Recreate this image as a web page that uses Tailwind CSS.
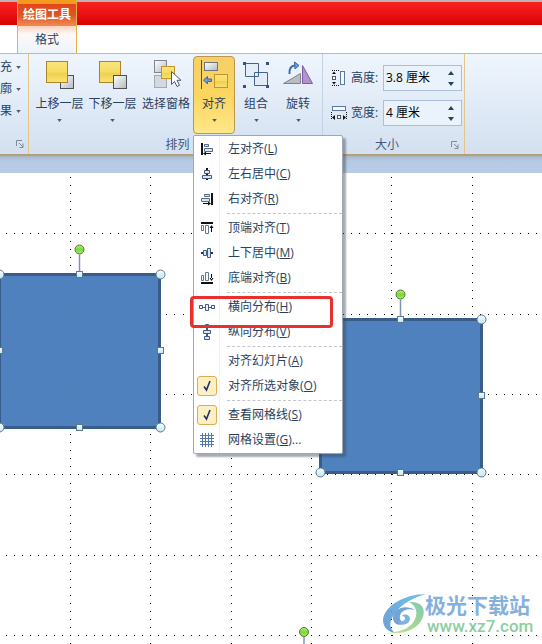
<!DOCTYPE html>
<html lang="zh-CN">
<head>
    <meta charset="UTF-8">
    <meta name="viewport" content="width=device-width, initial-scale=1.0">
    <title>绘图工具 - 格式</title>
    <script src="https://cdn.jsdelivr.net/npm/@tailwindcss/browser@4"></script>
</head>
<body class="relative min-h-screen flex flex-col overflow-hidden bg-white text-xs text-[#2b3f5e] font-['Open_Sans','Noto_Sans_CJK_SC',sans-serif]">
    <!-- title bar and tabs -->
    <header class="flex h-[53px] bg-linear-to-b from-[#bcb4b4] from-[2px] via-[#fa2020] via-[2px] to-[#d80000] to-[25px] bg-[length:100%_25px] bg-no-repeat">
        <div class="ml-[17px] w-[60px] flex flex-col border-x border-[#e2b04a]">
            <div class="h-[26px] border-t-4 border-[#f39a1c] bg-linear-to-b from-[#e2461b] via-[#dd5522] to-[#f28a55] flex items-center justify-center font-bold text-white leading-4 whitespace-nowrap">绘图工具</div>
            <button class="flex-1 bg-linear-to-b from-[#fbd3bd] via-[#fdf8f6] via-30% to-[#edf4fc]">格式</button>
        </div>
        <div class="flex-1"></div>
    </header>

    <!-- ribbon -->
    <section class="h-[103px] flex border-t border-b-2 border-t-[#dfb95e] border-b-[#b3a076] bg-linear-to-b from-[#eff5fd] via-[#e1ebf7] to-[#d3e0f0] whitespace-nowrap">
        <div class="w-[29px] shrink-0 flex flex-col border-r border-[#e3c58c]">
            <div class="h-[78px] pt-[2px] flex flex-col">
                <button class="h-[22px] flex items-center gap-1">充<svg class="w-[5px] h-[3px]" viewBox="0 0 6 4"><path d="M0 0h6L3 4z" fill="#4c5b72"/></svg></button>
                <button class="h-[22px] flex items-center gap-1">廓<svg class="w-[5px] h-[3px]" viewBox="0 0 6 4"><path d="M0 0h6L3 4z" fill="#4c5b72"/></svg></button>
                <button class="h-[22px] flex items-center gap-1">果<svg class="w-[5px] h-[3px]" viewBox="0 0 6 4"><path d="M0 0h6L3 4z" fill="#4c5b72"/></svg></button>
            </div>
            <button class="mt-auto mb-1 ml-4 w-3 h-3" aria-label="形状样式"><svg class="w-2 h-2" viewBox="0 0 8 8" fill="none" stroke="#7f8a9b"><path d="M.5 6V.5H6M3 3l4 4M7 3.500V7.500H3.500"/></svg></button>
        </div>

        <div class="w-[294px] shrink-0 flex flex-col border-r border-[#c5d2e3] pl-1">
            <div class="flex h-20 pt-[2px]">
                <button class="w-[53px] flex flex-col items-center">
                    <svg class="w-8 h-8 mt-1" viewBox="0 0 32 32">
                        <defs>
                            <linearGradient id="gold" x2="0" y2="1"><stop offset="0" stop-color="#fbe57e"/><stop offset=".5" stop-color="#f5dc62"/><stop offset=".55" stop-color="#efd04e"/><stop offset="1" stop-color="#fae374"/></linearGradient>
                            <linearGradient id="grey" x2="1" y2="1"><stop offset="0" stop-color="#ffffff"/><stop offset="1" stop-color="#b4b9c1"/></linearGradient>
                        </defs>
                        <rect x="16.500" y="15.500" width="13" height="13" fill="url(#grey)" stroke="#4c5058"/>
                        <rect x="2.500" y="1.500" width="21" height="21" fill="url(#gold)" stroke="#a8842c"/>
                    </svg>
                    <span class="mt-1 h-4 leading-4">上移一层</span>
                    <svg class="w-[5px] h-[3px] mt-[7px]" viewBox="0 0 6 4"><path d="M0 0h6L3 4z" fill="#4c5b72"/></svg>
                </button>
                <button class="w-[53px] flex flex-col items-center">
                    <svg class="w-8 h-8 mt-1" viewBox="0 0 32 32">
                        <rect x="2.500" y="1.500" width="21" height="21" fill="url(#gold)" stroke="#a8842c"/>
                        <rect x="16.500" y="15.500" width="13" height="13" fill="url(#grey)" stroke="#4c5058"/>
                    </svg>
                    <span class="mt-1 h-4 leading-4">下移一层</span>
                    <svg class="w-[5px] h-[3px] mt-[7px]" viewBox="0 0 6 4"><path d="M0 0h6L3 4z" fill="#4c5b72"/></svg>
                </button>
                <button class="w-[54px] flex flex-col items-center">
                    <svg class="w-8 h-8 mt-1" viewBox="0 0 32 32">
                        <rect x="4.500" y=".5" width="12" height="12" fill="url(#grey)" stroke="#7f858f"/>
                        <rect x="4.500" y="15.500" width="12" height="12" fill="#d4d9e0" stroke="#a3a9b3"/>
                        <rect x="11.500" y="6.500" width="13" height="12" fill="url(#gold)" stroke="#c4942a"/>
                        <path d="M21.500 11.500v13l3-3 2.500 5 2.500-1.200-2.500-5h4z" fill="#fff" stroke="#4f5a6e"/>
                    </svg>
                    <span class="mt-1 h-4 leading-4">选择窗格</span>
                </button>
                <button class="w-[42px] h-[78px] flex flex-col items-center rounded-sm border border-[#bd9648] bg-linear-to-b from-[#f6cf68] via-[#fbd55e] to-[#ffe78a]" aria-expanded="true">
                    <svg class="w-8 h-8 mt-[3px]" viewBox="0 0 32 32">
                        <path d="M3.500 0v29" stroke="#3f526f"/>
                        <rect x="6.500" y="2.500" width="13" height="8" fill="url(#grey)" stroke="#70757e"/>
                        <rect x="16.500" y="14.500" width="13" height="13" fill="url(#gold)" stroke="#c4942a"/>
                        <path d="M5.500 20l4-3.500V19h4v2.500h-4V24z" fill="#6f9de0" stroke="#3c65ad"/>
                    </svg>
                    <span class="mt-1 h-4 leading-4">对齐</span>
                    <svg class="w-[5px] h-[3px] mt-[7px]" viewBox="0 0 6 4"><path d="M0 0h6L3 4z" fill="#4c5b72"/></svg>
                </button>
                <button class="w-[42px] flex flex-col items-center">
                    <svg class="w-8 h-8 mt-1" viewBox="0 0 32 32">
                        <path d="M5.500 3.500h13v13h-13zM14.500 12.500h13v13h-13z" fill="#dfe9f6" fill-opacity=".6" stroke="#45628f"/>
                        <path d="M3 2h3v3H3zM26 2h3v3h-3zM3 25h3v3H3zM26 25h3v3h-3z" fill="#2f5287"/>
                    </svg>
                    <span class="mt-1 h-4 leading-4">组合</span>
                    <svg class="w-[5px] h-[3px] mt-[7px]" viewBox="0 0 6 4"><path d="M0 0h6L3 4z" fill="#4c5b72"/></svg>
                </button>
                <button class="w-[42px] flex flex-col items-center">
                    <svg class="w-8 h-8 mt-1" viewBox="0 0 32 32">
                        <path d="M1.500 23.500L18.500 13.500V23.500z" fill="#b9bcc1" stroke="#80848c"/>
                        <path d="M20.500 5.500L30.500 23.500H20.500z" fill="#b292cf" stroke="#7f5ca3"/>
                        <path d="M7.500 14C7 9 9 5.500 13 5.500" fill="none" stroke="#3e6cb0" stroke-width="2"/>
                        <path d="M12.500 2l4.500 3.500-4 3.500z" fill="#6f9de0" stroke="#3c65ad"/>
                    </svg>
                    <span class="mt-1 h-4 leading-4">旋转</span>
                    <svg class="w-[5px] h-[3px] mt-[7px]" viewBox="0 0 6 4"><path d="M0 0h6L3 4z" fill="#4c5b72"/></svg>
                </button>
            </div>
            <div class="h-5 pt-px leading-5 text-center text-[#44597b]">排列</div>
        </div>

        <div class="w-[142px] shrink-0 flex flex-col border-r border-[#e3c58c]">
            <div class="h-20 pt-[11px] pl-2 flex flex-col gap-[9px]">
                <div class="flex items-center h-[26px]">
                    <svg class="w-4 h-4" viewBox="0 0 16 16">
                        <path d="M1 .5h7M1 15.500h7" stroke="#111" stroke-dasharray="1 1"/>
                        <path d="M1 4l2-2.500L5 4zM1 12l2 2.500L5 12z" fill="#111"/>
                        <rect x="1.500" y="6.500" width="3" height="3" fill="#fff" stroke="#555"/>
                        <rect x="9.500" y="1.500" width="4" height="13" fill="#f4f8fd" stroke="#60789f"/>
                    </svg>
                    <label for="height" class="ml-1 w-8">高度:</label>
                    <div class="flex w-[79px] h-[26px] border border-[#a9bfdc] bg-[#eaf2fb]">
                        <input id="height" type="text" value="3.8 厘米" class="w-[60px] pl-[2px] pb-px text-black outline-none">
                        <div class="flex flex-col justify-center gap-[7px] pl-1">
                            <button aria-label="增加高度"><svg class="w-[6px] h-[4px]" viewBox="0 0 6 4"><path d="M0 4h6L3 0z" fill="#27405e"/></svg></button>
                            <button aria-label="减少高度"><svg class="w-[6px] h-[4px]" viewBox="0 0 6 4"><path d="M0 0h6L3 4z" fill="#27405e"/></svg></button>
                        </div>
                    </div>
                </div>
                <div class="flex items-center h-[26px]">
                    <svg class="w-4 h-4" viewBox="0 0 16 16">
                        <rect x="1.500" y="1.500" width="13" height="4" fill="#f4f8fd" stroke="#60789f"/>
                        <path d="M.5 7v8M15.500 7v8" stroke="#111" stroke-dasharray="1 1"/>
                        <path d="M4 10L1 12.500 4 15zM12 10l3 2.500-3 2.500z" fill="#111"/>
                        <rect x="6.500" y="10.500" width="3" height="3" fill="#fff" stroke="#555"/>
                    </svg>
                    <label for="width" class="ml-1 w-8">宽度:</label>
                    <div class="flex w-[79px] h-[26px] border border-[#a9bfdc] bg-[#eaf2fb]">
                        <input id="width" type="text" value="4 厘米" class="w-[60px] pl-[2px] pb-px text-black outline-none">
                        <div class="flex flex-col justify-center gap-[7px] pl-1">
                            <button aria-label="增加宽度"><svg class="w-[6px] h-[4px]" viewBox="0 0 6 4"><path d="M0 4h6L3 0z" fill="#27405e"/></svg></button>
                            <button aria-label="减少宽度"><svg class="w-[6px] h-[4px]" viewBox="0 0 6 4"><path d="M0 0h6L3 4z" fill="#27405e"/></svg></button>
                        </div>
                    </div>
                </div>
            </div>
            <div class="h-5 pt-px flex items-center text-[#44597b]">
                <span class="flex-1 text-center leading-5">大小</span>
                <button class="w-3 h-3 mr-px" aria-label="大小和位置"><svg class="w-2 h-2" viewBox="0 0 8 8" fill="none" stroke="#7f8a9b"><path d="M.5 6V.5H6M3 3l4 4M7 3.500V7.500H3.500"/></svg></button>
            </div>
        </div>
    </section>
    <div class="h-[17px] bg-linear-to-b from-[#aab6c5] via-[#b5cae5] via-30% to-[#b9cce4]"></div>

    <!-- slide -->
    <main class="flex-1 overflow-hidden">
        <svg class="block w-[542px] h-[471px] max-w-none" viewBox="0 173 542 471">
            <defs>
                <linearGradient id="knob" x2="0" y2="1"><stop offset="0" stop-color="#b8ec7c"/><stop offset=".5" stop-color="#7fd835"/><stop offset="1" stop-color="#a5ea62"/></linearGradient>
                <linearGradient id="handle" x2="0" y2="1"><stop offset="0" stop-color="#f4fcfe"/><stop offset="1" stop-color="#c5e6ef"/></linearGradient>
                <linearGradient id="swirl" x1="1" x2="0" y2="1"><stop offset="0" stop-color="#57b7e8"/><stop offset="1" stop-color="#5a8dcc"/></linearGradient>
                <linearGradient id="leaf" x1="1" x2="0" y2="1"><stop offset="0" stop-color="#6cc1a4"/><stop offset=".6" stop-color="#9bd27a"/><stop offset="1" stop-color="#c8e08c"/></linearGradient>
            </defs>
            <g id="grid"></g>
            <g fill="#4e81bd" stroke="#385d8a" stroke-width="3">
                <rect x="-.5" y="274.500" width="160" height="153"/>
                <rect x="320.500" y="319.500" width="161" height="153"/>
            </g>
            <g id="innerGrid" opacity=".28"></g>
            <g id="handles"></g>
            <!-- site mark -->
            <g opacity=".85">
                <path d="M426 594C405 594 384 606 383 620c0 7 5 12 12 13-5-4-6-9-3-15 5-11 17-19 34-24z" fill="url(#swirl)"/>
                <path d="M415 610c-9-6-22-2-22 8 0 8 11 9 15 3-5 2-9 0-8-5 1-6 8-8 15-6z" fill="#5b95d2"/>
                <path d="M398 621c1 5 11 5 12-2 0-4-5-6-8-3 4 0 4 5 0 5z" fill="#67a6da"/>
                <path d="M409 602c12-1 17 6 14 15-4 11-17 18-36 16 15-1 25-6 28-14 3-7 1-13-6-17z" fill="url(#leaf)"/>
                <text x="425" y="613" font-size="21" font-weight="700" fill="#6fa3d6">极光下载站</text>
                <text x="427" y="632" font-size="17" font-weight="500" font-family="Roboto, sans-serif" fill="#78c68f">www.xz7.com</text>
            </g>
        </svg>
    </main>

    <!-- align menu -->
    <div id="alignMenu" class="absolute left-[193px] top-[135px] w-[150px] pb-px rounded-[2px] border border-[#a1a7b0] bg-white shadow-[3px_3px_2px_rgba(60,70,85,0.45)] bg-linear-to-r from-white from-[25px] via-[#e1e4e8] via-[25px] to-white to-[26px] whitespace-nowrap">
        <button class="h-[25px] w-full flex items-center">
            <svg class="w-4 h-4 ml-[5px] mr-[13px]" viewBox="0 0 16 16"><path d="M2 2h2v12H2z" fill="#111"/><path d="M5.500 3.500h4v2h-4zM5.500 7.500h8v3h-8z" fill="#dce6f3" stroke="#536a88"/><path d="M7 12h5v1H7zM4 12.500l3-2v4z" fill="#111"/></svg>
            <span>左对齐(<u>L</u>)</span>
        </button>
        <button class="h-[25px] w-full flex items-center">
            <svg class="w-4 h-4 ml-[5px] mr-[13px]" viewBox="0 0 16 16"><path d="M7 2h2v12H7z" fill="#111"/><path d="M5.500 4.500h5v3h-5zM3.500 9.500h9v3h-9z" fill="#dce6f3" stroke="#405b82"/></svg>
            <span>左右居中(<u>C</u>)</span>
        </button>
        <button class="h-[25px] w-full flex items-center">
            <svg class="w-4 h-4 ml-[5px] mr-[13px]" viewBox="0 0 16 16"><path d="M12 2h2v12h-2z" fill="#111"/><path d="M5.500 3.500h5v2h-5zM2.500 7.500h8v3h-8z" fill="#dce6f3" stroke="#536a88"/><path d="M4 12h5v1H4zM12 12.500l-3-2v4z" fill="#111"/></svg>
            <span>右对齐(<u>R</u>)</span>
        </button>
        <div class="h-1 ml-[33px] flex items-center"><hr class="w-full border-dashed border-[#c3c6ca]"></div>
        <button class="h-[25px] w-full flex items-center">
            <svg class="w-4 h-4 ml-[5px] mr-[13px]" viewBox="0 0 16 16"><path d="M2 2h12v2H2z" fill="#111"/><path d="M2.500 5.500h2v5h-2zM6.500 5.500h3v8h-3z" fill="#fff" stroke="#657891"/><path d="M12 7h1v5h-1zM12.500 5l2 3h-4z" fill="#111"/></svg>
            <span>顶端对齐(<u>T</u>)</span>
        </button>
        <button class="h-[25px] w-full flex items-center">
            <svg class="w-4 h-4 ml-[5px] mr-[13px]" viewBox="0 0 16 16"><path d="M2 7h12v2H2z" fill="#223a5c"/><path d="M4.500 5.500h3v5h-3zM8.500 3.500h3v9h-3z" fill="#dce6f3" stroke="#405b82"/></svg>
            <span>上下居中(<u>M</u>)</span>
        </button>
        <button class="h-[25px] w-full flex items-center">
            <svg class="w-4 h-4 ml-[5px] mr-[13px]" viewBox="0 0 16 16"><path d="M2 12h12v2H2z" fill="#111"/><path d="M2.500 5.500h2v5h-2zM6.500 2.500h3v8h-3z" fill="#fff" stroke="#657891"/><path d="M12 4h1v5h-1zM12.500 11l2-3h-4z" fill="#111"/></svg>
            <span>底端对齐(<u>B</u>)</span>
        </button>
        <div class="h-1 ml-[33px] flex items-center"><hr class="w-full border-dashed border-[#c3c6ca]"></div>
        <button class="h-[25px] w-full flex items-center">
            <svg class="w-4 h-4 ml-[5px] mr-[13px]" viewBox="0 0 16 16"><path d="M2 8.500h12" stroke="#405b82"/><path d="M.5 6.500h3v3h-3zM6.500 5.500h3v6h-3zM12.500 6.500h3v3h-3z" fill="#eef3fa" stroke="#405b82"/></svg>
            <span>横向分布(<u>H</u>)</span>
        </button>
        <button class="h-[25px] w-full flex items-center">
            <svg class="w-4 h-4 ml-[5px] mr-[13px]" viewBox="0 0 16 16"><path d="M8 2v12" stroke="#405b82" stroke-width="2"/><path d="M6.500 .5h3v3h-3zM4.500 6.500h7v3h-7zM5.500 12.500h5v3h-5z" fill="#dce6f3" stroke="#405b82"/></svg>
            <span>纵向分布(<u>V</u>)</span>
        </button>
        <div class="h-1 ml-[33px] flex items-center"><hr class="w-full border-dashed border-[#c3c6ca]"></div>
        <button class="h-[25px] w-full flex items-center pl-[34px]">
            <span>对齐幻灯片(<u>A</u>)</span>
        </button>
        <button class="h-[25px] w-full flex items-center">
            <svg class="w-5 h-5 ml-[3px] mr-[11px] rounded-[3px] border border-[#e0aa55] bg-[#fdf1c4]" viewBox="0 0 18 18"><path d="M6 9.500L8.500 13 12 4" fill="none" stroke="#1f2f6b" stroke-width="1.600"/></svg>
            <span>对齐所选对象(<u>O</u>)</span>
        </button>
        <div class="h-1 ml-[33px] flex items-center"><hr class="w-full border-dashed border-[#c3c6ca]"></div>
        <button class="h-[25px] w-full flex items-center">
            <svg class="w-5 h-5 ml-[3px] mr-[11px] rounded-[3px] border border-[#e0aa55] bg-[#fdf1c4]" viewBox="0 0 18 18"><path d="M6 9.500L8.500 13 12 4" fill="none" stroke="#1f2f6b" stroke-width="1.600"/></svg>
            <span>查看网格线(<u>S</u>)</span>
        </button>
        <button class="h-[25px] w-full flex items-center">
            <svg class="w-4 h-4 ml-[5px] mr-[13px]" viewBox="0 0 16 16"><path d="M3.500 1v14M6.500 1v14M9.500 1v14M12.500 1v14M1 3.500h14M1 6.500h14M1 9.500h14M1 12.500h14" stroke="#4f78ae"/></svg>
            <span>网格设置(<u>G</u>)...</span>
        </button>
    </div>
    <!-- highlight over the menu entry -->
    <div class="absolute left-[190px] top-[296px] w-[143px] h-[32px] rounded-[4px] border-3 border-[#e8302c] pointer-events-none"></div>

    <script>
        const NS = 'http://www.w3.org/2000/svg';
        const columns = [70, 150, 231, 311, 391, 472];
        const rows = [233, 314, 394, 474, 555, 635];

        function add(parent, tag, attrs) {
            const el = document.createElementNS(NS, tag);
            for (const key in attrs) el.setAttribute(key, attrs[key]);
            document.getElementById(parent).appendChild(el);
        }

        function drawDots(parent, fill, inside) {
            const dot = (x, y) => {
                if (!inside || inside(x, y)) add(parent, 'rect', {x, y, width: 1, height: 1, fill});
            };
            columns.forEach(x => { for (let k = 0; k < 59; k++) dot(x, Math.round(177 + 8.04 * k)); });
            rows.forEach(y => { for (let k = 1; k < 68; k++) dot(Math.round(8.04 * k - 2.4), y); });
        }

        function drawKnob(x, y, to) {
            add('handles', 'path', {d: `M${x} ${y + 5}V${to}`, stroke: '#7d93b5', 'stroke-width': 1.5});
            add('handles', 'circle', {cx: x, cy: y, r: 4.5, fill: 'url(#knob)', stroke: '#4f7a3a'});
        }

        function drawHandles(x1, y1, x2, y2) {
            const mx = Math.floor((x1 + x2) / 2) - 0.5, my = Math.round((y1 + y2) / 2) - 0.5;
            drawKnob(mx, y1 - 25, y1);
            [[x1, y1], [x2, y1], [x1, y2], [x2, y2]].forEach(([cx, cy]) =>
                add('handles', 'circle', {cx, cy, r: 4.5, fill: 'url(#handle)', stroke: '#5c7a8c'}));
            [[mx, y1], [mx, y2], [x1, my], [x2, my]].forEach(([x, y]) =>
                add('handles', 'rect', {x: x - 3, y: y - 3, width: 6, height: 6, fill: 'url(#handle)', stroke: '#5c7a8c'}));
        }

        drawDots('grid', '#000');
        drawDots('innerGrid', '#8a8a8a', (x, y) => (x < 158 && y > 276 && y < 426) || (x > 322 && x < 480 && y > 321 && y < 471));
        drawHandles(-0.5, 274.5, 160.5, 427.5);
        drawHandles(320.5, 319.5, 481.5, 472.5);
        drawKnob(304, 632, 644);
    </script>
</body>
</html>
